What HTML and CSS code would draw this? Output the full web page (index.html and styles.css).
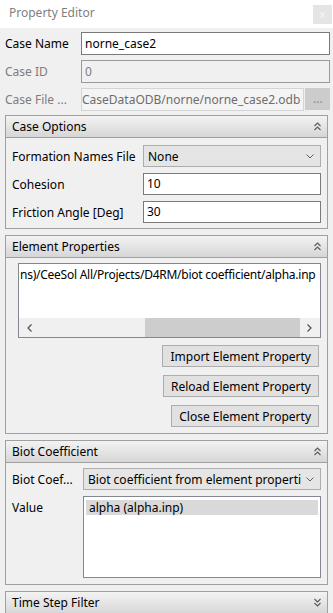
FILE: index.html
```html
<!DOCTYPE html>
<html lang="en">
<head>
  <meta charset="UTF-8" />
  <title>Property Editor</title>
  <link rel="stylesheet" href="styles.css">
</head>
<body>

  <!-- dock title -->
  <div class="titlebar">
    <span class="title">Property Editor</span>
    <span class="close">x</span>
  </div>

  <!-- case fields -->
  <div class="form">
    <span class="lbl">Case Name</span>
    <div class="field">norne_case2</div>

    <span class="lbl off">Case ID</span>
    <div class="field disabled">0</div>

    <span class="lbl off">Case File ...</span>
    <div class="file-row">
      <div class="field readonly"><span>CaseDataODB/norne/norne_case2.odb</span></div>
      <button class="dots">...</button>
    </div>
  </div>

  <!-- Case Options -->
  <div class="group">
    <div class="group-head">
      <span>Case Options</span>
      <svg class="chev" viewBox="0 0 7 9"><polyline points="0.5,4 3.5,1 6.5,4"/><polyline points="0.5,8 3.5,5 6.5,8"/></svg>
    </div>
    <div class="group-body grid-wide">
      <span class="lbl">Formation Names File</span>
      <div class="combo"><span>None</span><svg class="drop" viewBox="0 0 8 5"><polyline points="0.5,0.5 4,4 7.5,0.5"/></svg></div>

      <span class="lbl">Cohesion</span>
      <div class="field">10</div>

      <span class="lbl">Friction Angle [Deg]</span>
      <div class="field">30</div>
    </div>
  </div>

  <!-- Element Properties -->
  <div class="group">
    <div class="group-head">
      <span>Element Properties</span>
      <svg class="chev" viewBox="0 0 7 9"><polyline points="0.5,4 3.5,1 6.5,4"/><polyline points="0.5,8 3.5,5 6.5,8"/></svg>
    </div>
    <div class="group-body stack">
      <div class="list files">
        <div class="list-text">ns)/CeeSol All/Projects/D4RM/biot coefficient/alpha.inp</div>
        <div class="hscroll">
          <svg class="arr" viewBox="0 0 5 8"><polyline points="4.5,0.5 1,4 4.5,7.5"/></svg>
          <div class="track"><div class="thumb"></div></div>
          <svg class="arr" viewBox="0 0 5 8"><polyline points="0.5,0.5 4,4 0.5,7.5"/></svg>
        </div>
      </div>
      <button class="btn">Import Element Property</button>
      <button class="btn">Reload Element Property</button>
      <button class="btn">Close Element Property</button>
    </div>
  </div>

  <!-- Biot Coefficient -->
  <div class="group">
    <div class="group-head">
      <span>Biot Coefficient</span>
      <svg class="chev" viewBox="0 0 7 9"><polyline points="0.5,4 3.5,1 6.5,4"/><polyline points="0.5,8 3.5,5 6.5,8"/></svg>
    </div>
    <div class="group-body grid-narrow">
      <span class="lbl">Biot Coef...</span>
      <div class="combo"><span>Biot coefficient from element properti</span><svg class="drop" viewBox="0 0 8 5"><polyline points="0.5,0.5 4,4 7.5,0.5"/></svg></div>

      <span class="lbl top">Value</span>
      <div class="list values">
        <div class="item sel">alpha (alpha.inp)</div>
      </div>
    </div>
  </div>

  <!-- Time Step Filter (collapsed) -->
  <div class="group">
    <div class="group-head last">
      <span>Time Step Filter</span>
      <svg class="chev" viewBox="0 0 7 9"><polyline points="0.5,1 3.5,4 6.5,1"/><polyline points="0.5,5 3.5,8 6.5,5"/></svg>
    </div>
  </div>

</body>
</html>
```

FILE: styles.css
```css
* { box-sizing: border-box; margin: 0; padding: 0 }
html, body {
  width: 333px; height: 613px;
  overflow: hidden;
  background: #f0f0f0;
  font-family: 'Noto Sans', 'Open Sans', sans-serif;
  font-size: 12px;
  color: #000;
}

/*–––– Title ––––*/
.titlebar {
  height: 28px;
  background: #fff;
  display: flex; justify-content: space-between; align-items: flex-start;
  padding: 4px 1px 0 9px;
}
.title { color: #808080; line-height: 18px; }
.close {
  width: 19px; height: 19px; margin-top: 1px;
  background: #e5e5e5; color: #f7f7f7;
  font-size: 11px; line-height: 18px; text-align: center;
}

/*–––– Fields ––––*/
.form {
  display: grid;
  grid-template-columns: 76px 1fr;
  row-gap: 5px;
  align-items: center;
  padding: 4px 5px 0 5px;
}
.lbl { white-space: nowrap; }
.lbl.off { color: #7d7d7d; }
.lbl.top { align-self: start; padding-top: 3px; }

.field {
  height: 23px;
  background: #fff;
  border: 1px solid #7a7a7a;
  padding: 0 3px;
  line-height: 21px;
  white-space: nowrap; overflow: hidden;
}
.field.disabled { background: #f0f0f0; border-color: #9a9a9a; color: #7d7d7d; }
.field.readonly {
  flex: 1;
  background: #f4f4f4; border-color: #d4d4d4; color: #6d6d6d;
  display: flex; justify-content: flex-end;
  padding: 0 3px 0 0;
}
.file-row { display: flex; gap: 1px; }
.dots {
  width: 25px; height: 22px;
  background: #cccccc; border: 1px solid #cccccc; color: #8a8a8a;
  font: inherit; line-height: 18px;
}

/*–––– Groups ––––*/
.group {
  margin: 4px 5px 0;
  border: 1px solid #a0a0a0;
}
.group + .group { margin-top: 6px; }
.group-head {
  height: 22px;
  display: flex; justify-content: space-between; align-items: center;
  padding: 0 6px 1px 6px;
  background: linear-gradient(#f3f3f3, #d6d6d6);
  border-bottom: 1px solid #a0a0a0;
}
.group-head.last { border-bottom: none; }
.chev { width: 7px; height: 9px; fill: none; stroke: #5a5a5a; stroke-width: 1.1; }

.group-body { padding: 7px 6px 5px 6px; }
.grid-wide, .grid-narrow {
  display: grid;
  row-gap: 6px;
  align-items: center;
}
.grid-wide { grid-template-columns: 131px 1fr; }
.grid-wide .field { height: 22px; line-height: 20px; }
.grid-narrow { grid-template-columns: 71px 1fr; padding: 5px 6px 6px 6px; }

.combo {
  height: 22px;
  background: #e5e5e5;
  border: 1px solid #adadad;
  display: flex; justify-content: space-between; align-items: center;
  padding: 0 6px 0 4px;
  white-space: nowrap; overflow: hidden;
}
.combo span { overflow: hidden; }
.drop { flex: none; width: 8px; height: 5px; margin-left: 4px; fill: none; stroke: #606060; stroke-width: 1; }

/*–––– Lists ––––*/
.list { background: #fff; border: 1px solid #828790; }
.stack { display: flex; flex-direction: column; align-items: flex-end; gap: 8px; padding: 5px 6px 6px 6px; }
.list.files {
  align-self: stretch;
  margin-left: 6px; margin-bottom: -1px;
  height: 75px;
  display: flex; flex-direction: column; justify-content: space-between;
}
.list-text {
  padding: 2px 1px;
  white-space: nowrap; overflow: hidden;
  line-height: 17px; letter-spacing: -0.25px;
}
.hscroll {
  height: 19px;
  background: #f0f0f0;
  display: flex; align-items: center;
}
.arr { width: 5px; height: 8px; margin: 0 7px 0 8px; fill: none; stroke: #505050; stroke-width: 1.2; }
.hscroll .arr:last-child { margin: 0 8px 0 7px; }
.track { flex: 1; height: 100%; display: flex; justify-content: flex-end; }
.thumb { width: 155px; height: 100%; background: #cdcdcd; }

.list.values { height: 82px; padding: 3px 2px; }
.item { line-height: 15px; padding: 0 3px; }
.item.sel { background: #d9d9d9; }

/*–––– Buttons ––––*/
.btn {
  height: 22px;
  margin-right: 2px;
  padding: 0 7px;
  background: #e1e1e1;
  border: 1px solid #adadad;
  font: inherit; color: #000;
}
```
